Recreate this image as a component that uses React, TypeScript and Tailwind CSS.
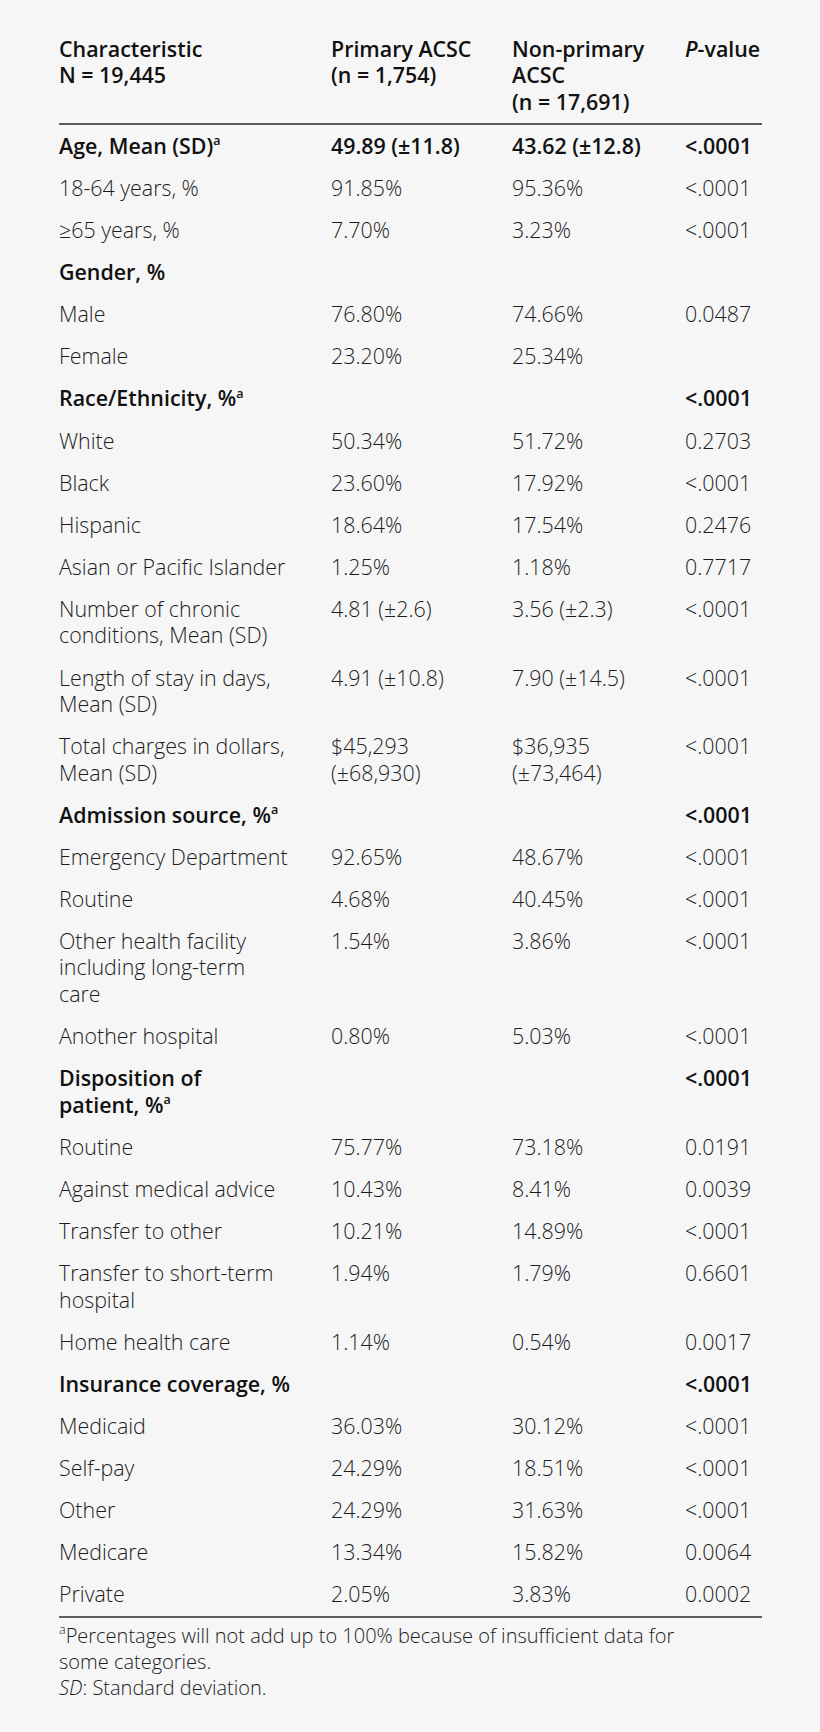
import React from "react";

type Row = {
  label: React.ReactNode;
  a?: string;
  b?: string;
  p?: string;
  bold?: boolean;
};

const Sup = () => <sup className="text-[12.5px] -top-[0.7em] font-semibold">a</sup>;

const rows: Row[] = [
  { label: <>Age, Mean (SD)<Sup /></>, a: "49.89 (±11.8)", b: "43.62 (±12.8)", p: "<.0001", bold: true },
  { label: "18-64 years, %", a: "91.85%", b: "95.36%", p: "<.0001" },
  { label: "≥65 years, %", a: "7.70%", b: "3.23%", p: "<.0001" },
  { label: "Gender, %", bold: true },
  { label: "Male", a: "76.80%", b: "74.66%", p: "0.0487" },
  { label: "Female", a: "23.20%", b: "25.34%" },
  { label: <>Race/Ethnicity, %<Sup /></>, p: "<.0001", bold: true },
  { label: "White", a: "50.34%", b: "51.72%", p: "0.2703" },
  { label: "Black", a: "23.60%", b: "17.92%", p: "<.0001" },
  { label: "Hispanic", a: "18.64%", b: "17.54%", p: "0.2476" },
  { label: "Asian or Pacific Islander", a: "1.25%", b: "1.18%", p: "0.7717" },
  { label: "Number of chronic conditions, Mean (SD)", a: "4.81 (±2.6)", b: "3.56 (±2.3)", p: "<.0001" },
  { label: "Length of stay in days, Mean (SD)", a: "4.91 (±10.8)", b: "7.90 (±14.5)", p: "<.0001" },
  { label: "Total charges in dollars, Mean (SD)", a: "$45,293 (±68,930)", b: "$36,935 (±73,464)", p: "<.0001" },
  { label: <>Admission source, %<Sup /></>, p: "<.0001", bold: true },
  { label: "Emergency Department", a: "92.65%", b: "48.67%", p: "<.0001" },
  { label: "Routine", a: "4.68%", b: "40.45%", p: "<.0001" },
  { label: "Other health facility including long-term care", a: "1.54%", b: "3.86%", p: "<.0001" },
  { label: "Another hospital", a: "0.80%", b: "5.03%", p: "<.0001" },
  {
    label: (
      <>
        Disposition of{" "}
        <span className="whitespace-nowrap">
          patient, %<Sup />
        </span>
      </>
    ),
    p: "<.0001",
    bold: true,
  },
  { label: "Routine", a: "75.77%", b: "73.18%", p: "0.0191" },
  { label: "Against medical advice", a: "10.43%", b: "8.41%", p: "0.0039" },
  { label: "Transfer to other", a: "10.21%", b: "14.89%", p: "<.0001" },
  { label: "Transfer to short-term hospital", a: "1.94%", b: "1.79%", p: "0.6601" },
  { label: "Home health care", a: "1.14%", b: "0.54%", p: "0.0017" },
  { label: "Insurance coverage, %", p: "<.0001", bold: true },
  { label: "Medicaid", a: "36.03%", b: "30.12%", p: "<.0001" },
  { label: "Self-pay", a: "24.29%", b: "18.51%", p: "<.0001" },
  { label: "Other", a: "24.29%", b: "31.63%", p: "<.0001" },
  { label: "Medicare", a: "13.34%", b: "15.82%", p: "0.0064" },
  { label: "Private", a: "2.05%", b: "3.83%", p: "0.0002" },
];

export default function App() {
  return (
    <div className="min-h-[1732px] w-[820px] bg-[#f6f6f6] px-[59px] pt-[28px] font-['Open_Sans','Noto_Sans',sans-serif] text-[#1c1c1c]">
      <table className="w-[703px] table-fixed border-collapse text-left text-[21.4px] leading-[26.5px]">
        <colgroup>
          <col className="w-[272px]" />
          <col className="w-[181px]" />
          <col className="w-[173px]" />
          <col className="w-[77px]" />
        </colgroup>
        <thead>
          <tr className="border-b-2 border-[#5c5c5c] align-top font-semibold text-[#111]">
            <th className="py-[7.8px] pr-[40px] font-semibold">
              Characteristic
              <br />N = 19,445
            </th>
            <th className="py-[7.8px] pr-[20px] font-semibold">
              Primary ACSC
              <br />
              (n = 1,754)
            </th>
            <th className="py-[7.8px] pr-[20px] font-semibold">
              Non-primary
              <br />
              ACSC
              <br />
              <span className="whitespace-nowrap">(n = 17,691)</span>
            </th>
            <th className="whitespace-nowrap py-[7.8px] font-semibold">
              <i>P</i>-value
            </th>
          </tr>
        </thead>
        <tbody className="border-b-2 border-[#5c5c5c]">
          {rows.map((r, i) => (
            <tr
              key={i}
              className={
                r.bold ? "align-top font-semibold text-[#111]" : "align-top font-light"
              }
            >
              <td className="py-[7.8px] pr-[40px]">{r.label}</td>
              <td className="py-[7.8px] pr-[20px]">{r.a}</td>
              <td className="py-[7.8px] pr-[20px]">{r.b}</td>
              <td className="whitespace-nowrap py-[7.8px]">{r.p}</td>
            </tr>
          ))}
        </tbody>
      </table>
      <div className="pt-[5px] text-[20px] leading-[26px] font-light text-[#1c1c1c]">
        <p>
          <sup className="text-[12.5px] -top-[0.7em]">a</sup>Percentages will not add up to 100% because of insufficient data for
          <br />
          some categories.
        </p>
        <p>
          <i>SD</i>: Standard deviation.
        </p>
      </div>
    </div>
  );
}
